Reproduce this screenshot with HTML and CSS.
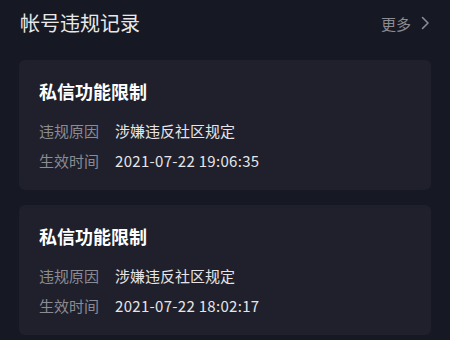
FILE: index.html
```html
<!DOCTYPE html>
<html>
<head>
	<meta charset="utf-8">
	<title>帐号违规记录</title>
	<link rel="stylesheet" href="styles.css">
</head>
<body>
	<div class="container">
		<div class="header">
			<h1>帐号违规记录</h1>
			<div class="more">
				<span>更多</span>
				<svg width="9" height="14" viewBox="0 0 9 14"><path d="M1.5 1.5 L7 7 L1.5 12.5" fill="none" stroke="#8a8b93" stroke-width="1.6" stroke-linecap="round" stroke-linejoin="round"/></svg>
			</div>
		</div>
		<div class="record">
			<div class="record-title">私信功能限制</div>
			<div class="record-row">
				<span class="label">违规原因</span>
				<span class="value">涉嫌违反社区规定</span>
			</div>
			<div class="record-row">
				<span class="label">生效时间</span>
				<span class="value time">2021-07-22 19:06:35</span>
			</div>
		</div>
		<div class="record">
			<div class="record-title">私信功能限制</div>
			<div class="record-row">
				<span class="label">违规原因</span>
				<span class="value">涉嫌违反社区规定</span>
			</div>
			<div class="record-row">
				<span class="label">生效时间</span>
				<span class="value time">2021-07-22 18:02:17</span>
			</div>
		</div>
	</div>
</body>
</html>
```

FILE: styles.css
```css
body {
	margin: 0;
	padding: 0;
	background-color: #161823;
	font-family: "Noto Sans CJK SC", "Noto Sans", sans-serif;
	color: #e6e6e8;
}
.container {
	padding: 0 19px;
}
.header {
	display: flex;
	align-items: center;
	justify-content: space-between;
	height: 46px;
	margin-bottom: 14px;
}
.header h1 {
	margin: 0 0 0 1px;
	font-size: 20px;
	font-weight: 400;
	line-height: 26px;
	color: #e8e8ea;
}
.more {
	display: flex;
	align-items: center;
	gap: 10px;
	margin-right: 1px;
	font-size: 15px;
	color: #8a8b93;
}
.record {
	background-color: #1f202c;
	border-radius: 6px;
	padding: 19px 20px 14px;
	margin-bottom: 15px;
}
.record-title {
	font-size: 18px;
	font-weight: 700;
	line-height: 24px;
	color: #ffffff;
	margin-bottom: 13px;
}
.record-row {
	display: flex;
	font-size: 15px;
	line-height: 30px;
}
.label {
	color: #8a8b93;
	margin-right: 16px;
}
.value {
	color: #e6e6e8;
}
.time {
	letter-spacing: 0.3px;
}
```
